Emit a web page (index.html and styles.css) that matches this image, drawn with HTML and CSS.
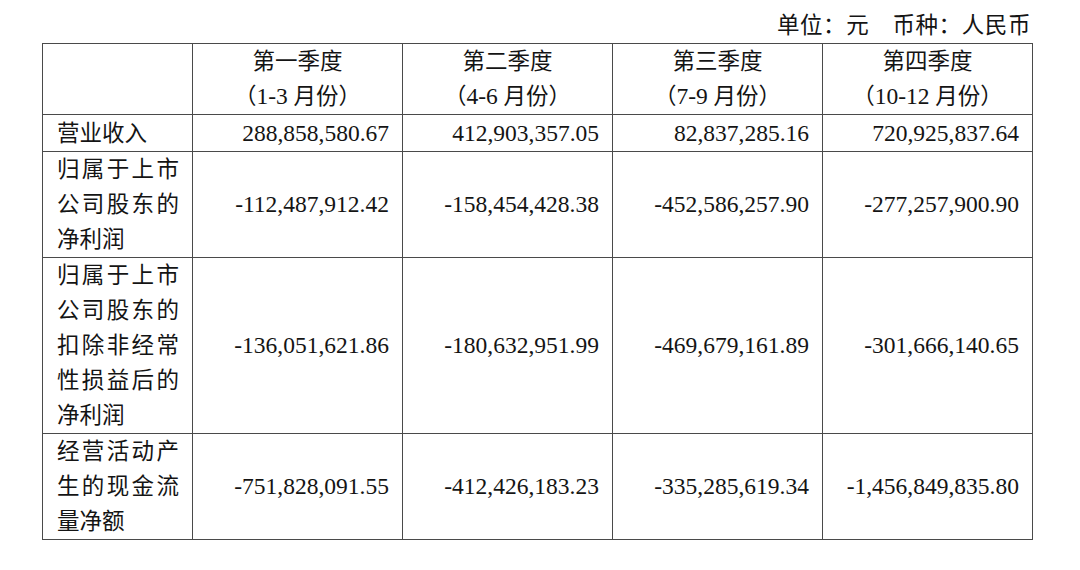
FILE: index.html
```html
<!DOCTYPE html>
<html lang="zh-CN">
<head>
<meta charset="utf-8">
<title>季度财务数据</title>
<link rel="stylesheet" href="styles.css">
</head>
<body>
<div class="page">
  <div class="unit">单位：元　币种：人民币</div>
  <table class="fin">
    <colgroup>
      <col class="c-label">
      <col class="c-q">
      <col class="c-q">
      <col class="c-q">
      <col class="c-q">
    </colgroup>
    <thead>
      <tr>
        <th></th>
        <th>第一季度<br>（<span class="lat">1-3 </span>月份）</th>
        <th>第二季度<br>（<span class="lat">4-6 </span>月份）</th>
        <th>第三季度<br>（<span class="lat">7-9 </span>月份）</th>
        <th>第四季度<br>（<span class="lat">10-12 </span>月份）</th>
      </tr>
    </thead>
    <tbody>
      <tr class="single">
        <td class="label">营业收入</td>
        <td class="num">288,858,580.67</td>
        <td class="num">412,903,357.05</td>
        <td class="num">82,837,285.16</td>
        <td class="num">720,925,837.64</td>
      </tr>
      <tr>
        <td class="label">归属于上市公司股东的净利润</td>
        <td class="num">-112,487,912.42</td>
        <td class="num">-158,454,428.38</td>
        <td class="num">-452,586,257.90</td>
        <td class="num">-277,257,900.90</td>
      </tr>
      <tr>
        <td class="label">归属于上市公司股东的扣除非经常性损益后的净利润</td>
        <td class="num">-136,051,621.86</td>
        <td class="num">-180,632,951.99</td>
        <td class="num">-469,679,161.89</td>
        <td class="num">-301,666,140.65</td>
      </tr>
      <tr>
        <td class="label">经营活动产生的现金流量净额</td>
        <td class="num">-751,828,091.55</td>
        <td class="num">-412,426,183.23</td>
        <td class="num">-335,285,619.34</td>
        <td class="num">-1,456,849,835.80</td>
      </tr>
    </tbody>
  </table>
</div>
</body>
</html>
```

FILE: styles.css
```css
html, body {
  margin: 0;
  padding: 0;
  background: #ffffff;
}

.page {
  padding: 8px 0 0 42px;
  width: 991px;
  font-family: "Liberation Serif", "Noto Sans CJK SC", serif;
  font-size: 22.5px;
  line-height: 35px;
  color: #141414;
}

.unit {
  text-align: right;
  padding-right: 2px;
  height: 35px;
  letter-spacing: 0.6px;
}

.fin {
  border-collapse: collapse;
  table-layout: fixed;
  width: 991px;
  border: 1px solid #4a4a4a;
}

.c-label { width: 150px; }
.c-q { width: 210px; }

.fin th,
.fin td {
  border: 1px solid #4a4a4a;
  padding: 0;
  vertical-align: middle;
}

.fin th {
  font-weight: normal;
  text-align: center;
}

.fin .lat {
  font-size: 23.5px;
}

.fin .single td {
  height: 36px;
}

.fin .label {
  text-align: justify;
  padding: 0 13px 0 14px;
}

.fin .num {
  text-align: right;
  padding-right: 13px;
  white-space: nowrap;
  font-size: 23.5px;
}
```
